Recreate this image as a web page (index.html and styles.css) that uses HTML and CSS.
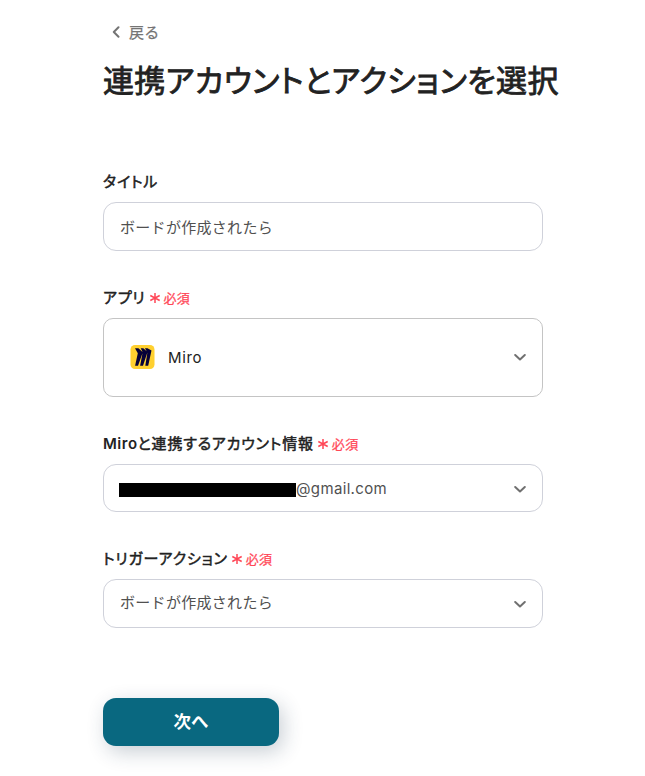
FILE: index.html
```html
<!DOCTYPE html>
<html lang="ja">
<head>
<meta charset="utf-8">
<title>連携アカウントとアクションを選択</title>
<link rel="stylesheet" href="styles.css">
</head>
<body>
<main class="page">
  <a class="back"><svg class="back-icon" viewBox="0 0 8 12"><path d="M6.500 1.300 1.800 6l4.700 4.700"/></svg><span>戻る</span></a>
  <h1 class="heading">連携アカウントとアクションを選択</h1>
  <form class="form">
    <section class="field field-title">
      <div class="label">タイトル</div>
      <div class="control"><span class="value">ボードが作成されたら</span></div>
    </section>
    <section class="field field-app">
      <div class="label">アプリ<span class="required"><svg class="star" viewBox="0 0 12 12"><path d="M6 1v10M1.300 3.500l9.400 5M10.700 3.500l-9.400 5"/></svg>必須</span></div>
      <div class="control control-app">
        <svg class="miro" viewBox="0 0 24 24"><rect width="24" height="24" rx="4.500" fill="#ffd02f"/><path fill="#050038" d="M17 3.300h-2.600l1.800 3-3.400-3h-2.600l1.900 3.600-4.200-3.600H4.500l2.800 5-2.700 12.400h2.900l4.500-12.400-2.400 12.400h2.900l4.400-13.300-2.100 13.300h2.900L21 5.500z"/></svg>
        <span class="app-name">Miro</span>
        <svg class="chevron" viewBox="0 0 12 8"><path d="M1.200 1.500 6 6l4.800-4.500"/></svg>
      </div>
    </section>
    <section class="field field-account">
      <div class="label"><span><span class="latin">Miro</span>と連携するアカウント情報</span><span class="required"><svg class="star" viewBox="0 0 12 12"><path d="M6 1v10M1.300 3.500l9.400 5M10.700 3.500l-9.400 5"/></svg>必須</span></div>
      <div class="control">
        <span class="redaction"></span><span class="email">@gmail.com</span>
        <svg class="chevron" viewBox="0 0 12 8"><path d="M1.200 1.500 6 6l4.800-4.500"/></svg>
      </div>
    </section>
    <section class="field field-trigger">
      <div class="label">トリガーアクション<span class="required"><svg class="star" viewBox="0 0 12 12"><path d="M6 1v10M1.300 3.500l9.400 5M10.700 3.500l-9.400 5"/></svg>必須</span></div>
      <div class="control">
        <span class="value">ボードが作成されたら</span>
        <svg class="chevron" viewBox="0 0 12 8"><path d="M1.200 1.500 6 6l4.800-4.500"/></svg>
      </div>
    </section>
    <button class="next" type="button">次へ</button>
  </form>
</main>
</body>
</html>
```
FILE: styles.css
```css
* { box-sizing: border-box; }
body {
  margin: 0;
  background: #fff;
  color: #222;
  font-family: Inter, "Noto Sans CJK JP", sans-serif;
  height: 776px;
  overflow: hidden;
}
.page { width: 440px; margin-left: 103px; padding-top: 20px; }
.back {
  display: flex;
  align-items: center;
  gap: 9px;
  height: 24px;
  padding-left: 9px;
  color: #747474;
  font-size: 15px;
  letter-spacing: 0.300px;
  -webkit-text-stroke: 0.250px #747474;
}
.back span { margin-top: -2px; }
.back-icon { width: 8px; height: 12px; fill: none; stroke: #747474; stroke-width: 2; stroke-linecap: round; stroke-linejoin: round; }
.heading {
  margin: 13px 0 0;
  height: 48px;
  line-height: 48px;
  font-size: 31px;
  font-weight: 400;
  letter-spacing: 0.280px;
  white-space: nowrap;
  font-feature-settings: "palt";
  -webkit-text-stroke: 0.800px #222;
}
.form { padding-top: 63px; }
.label {
  display: flex;
  align-items: center;
  height: 24px;
  margin-bottom: 10px;
  font-size: 15px;
  font-weight: 400;
  letter-spacing: 0.820px;
  font-feature-settings: "palt";
  white-space: nowrap;
  -webkit-text-stroke: 0.500px #222;
}
.latin { font-weight: 600; letter-spacing: 0.500px; -webkit-text-stroke: 0; }
.required { display: flex; align-items: center; gap: 3px; margin: 2px 0 0 3px; color: #ff4757; font-size: 13px; letter-spacing: 0.300px; -webkit-text-stroke: 0.250px #ff4757; }
.star { width: 12px; height: 12px; margin-top: 2px; fill: none; stroke: #ff4757; stroke-width: 1.500; }
.control {
  display: flex;
  align-items: center;
  height: 49px;
  padding: 0 16px;
  border: 1px solid #cfd1da;
  border-radius: 13px;
}
.field { margin-bottom: 33px; }
.field-account .control { height: 48px; padding-left: 15px; }
.control-app { height: 79px; padding-left: 26px; border-color: #c4c4c4; border-radius: 10px; }
.value { color: #505050; font-size: 15px; letter-spacing: 0.300px; }
.field-title .value { margin-top: -1px; }
.field-trigger .value { margin-top: -5px; }
.field-trigger { margin-bottom: 0; }
.field-trigger .chevron { margin-top: 2px; }
.miro { width: 25px; height: 24px; margin: -1px 13px 0 0; }
.app-name { font-size: 15px; letter-spacing: 0.600px; }
.chevron { width: 12px; height: 9px; margin-left: auto; fill: none; stroke: #707070; stroke-width: 2; stroke-linecap: round; stroke-linejoin: round; }
.field-account .chevron { margin-top: 2px; }
.redaction { width: 177px; height: 14px; margin-top: 3px; background: #000; }
.email { color: #505050; font-size: 15px; letter-spacing: 0.350px; }
.next {
  display: block;
  width: 176px;
  height: 48px;
  margin-top: 70px;
  padding: 0 0 3px;
  border: 0;
  border-radius: 13px;
  background: #096880;
  box-shadow: 4px 6px 20px rgba(30, 55, 80, 0.240);
  color: #fff;
  font-family: inherit;
  font-size: 17.500px;
  font-weight: 600;
}
```
